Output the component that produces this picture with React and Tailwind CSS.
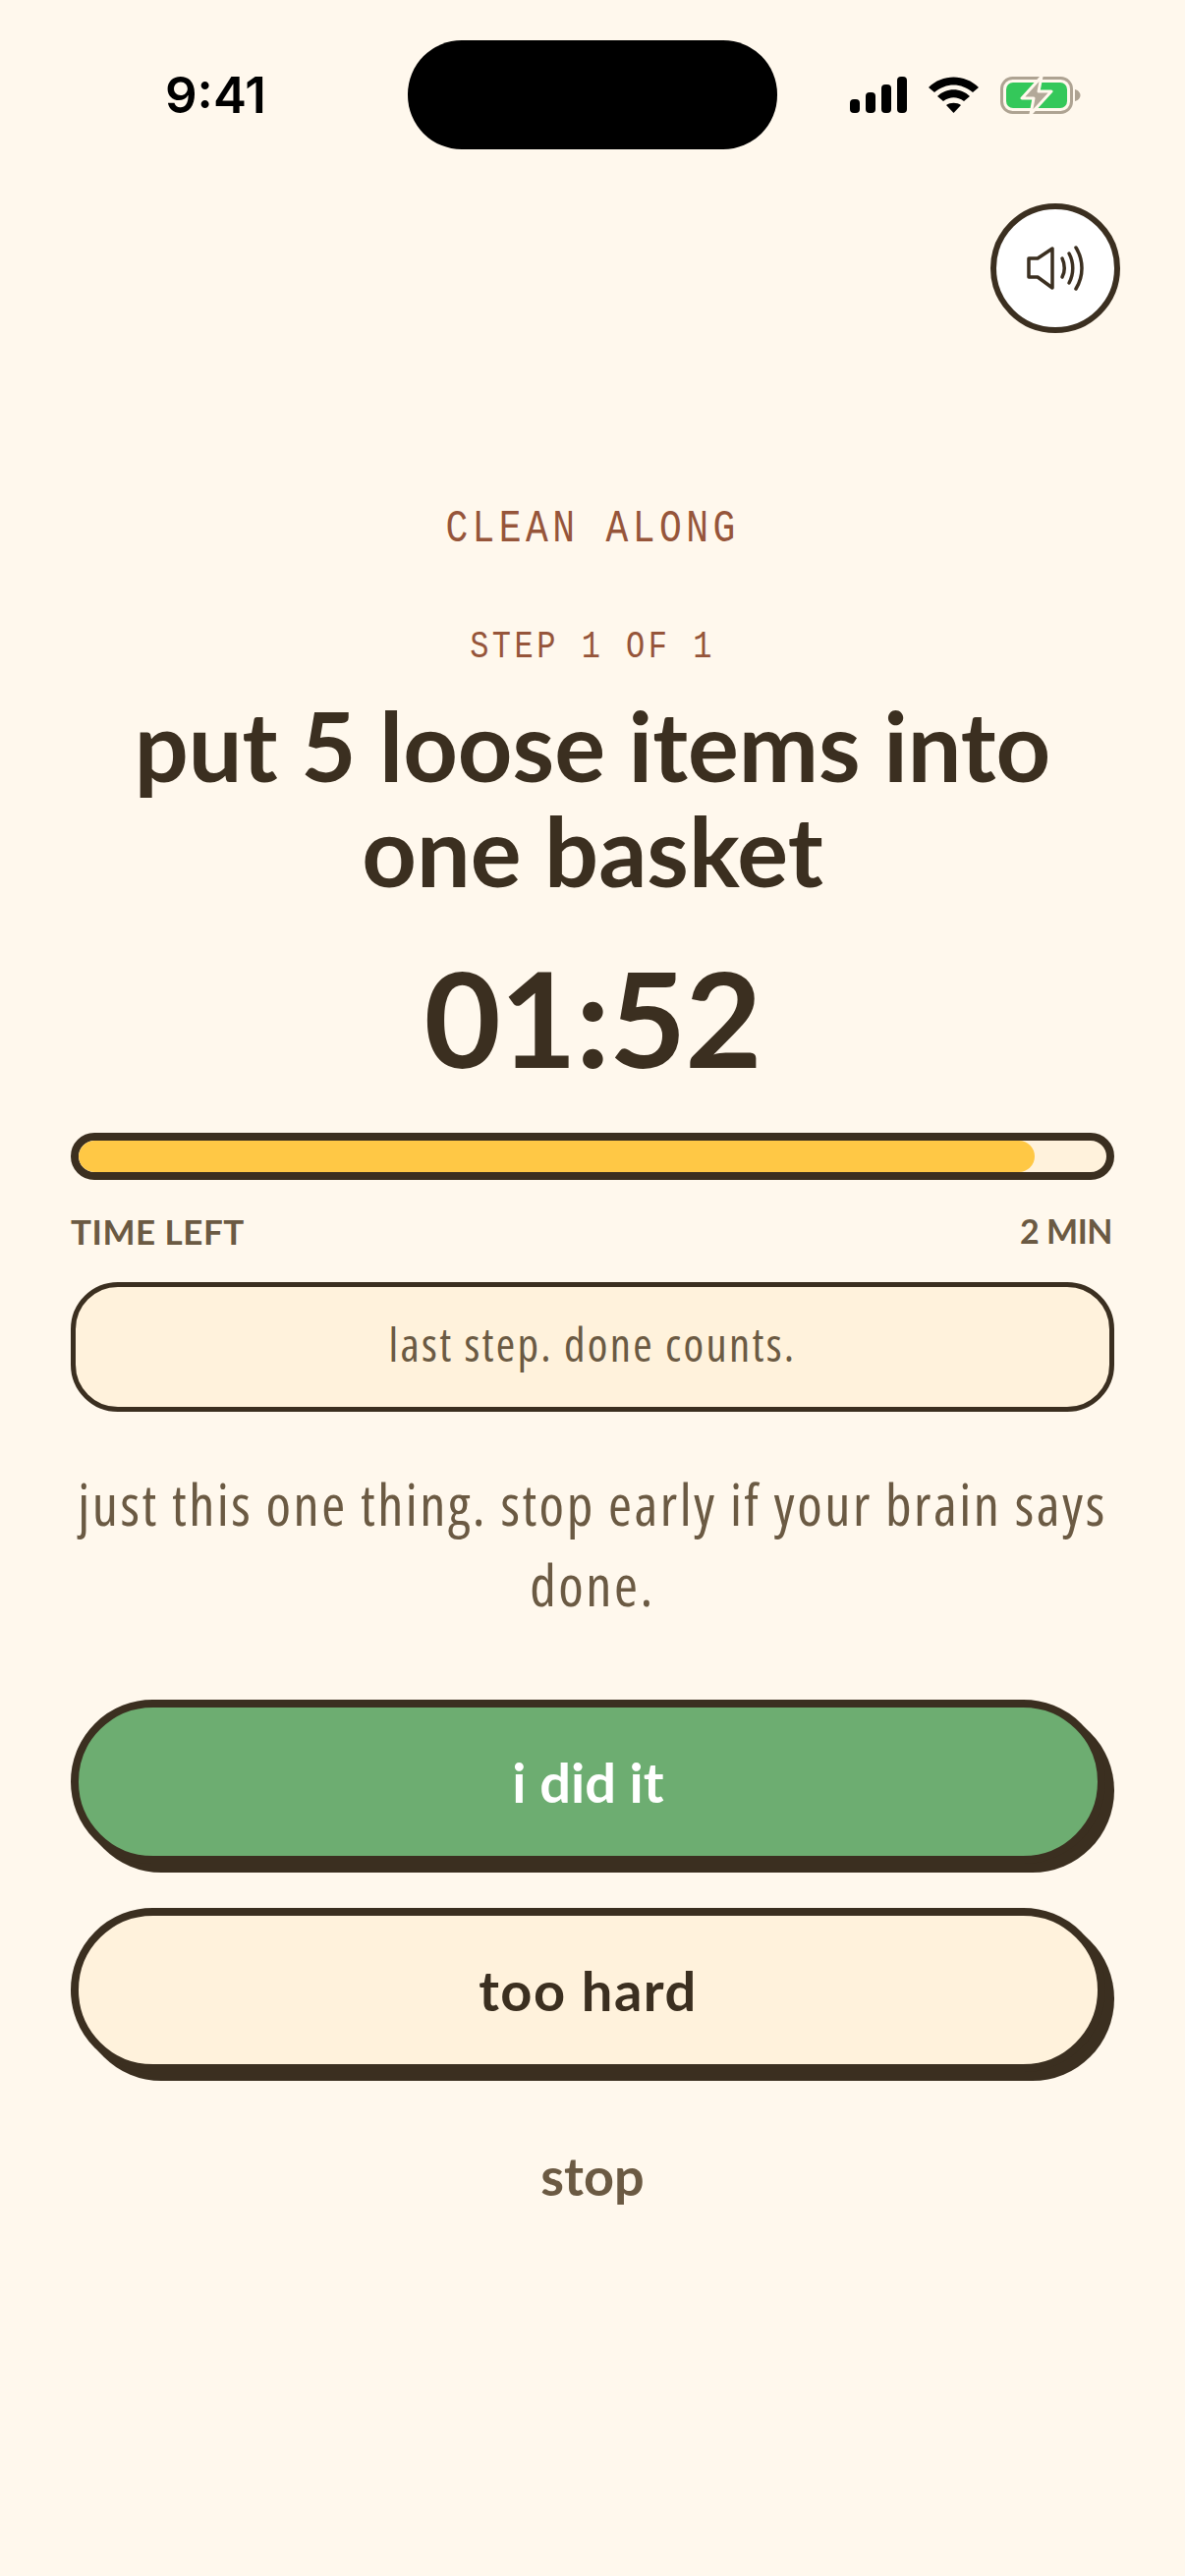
import React from 'react';

const StatusBar = () => (
    <div className="flex shrink-0 items-center pl-[168px] pt-[41px]">
        <span className="w-[102px] text-[51px] leading-none font-semibold text-black font-['Inter',sans-serif]">9:41</span>
        <div className="ml-[145px] h-[111px] w-[376px] rounded-[55px] bg-black" />
        <div className="ml-[74px] flex items-center gap-[22px]">
            <svg width="58" height="37" viewBox="0 0 58 37" fill="#000">
                <rect x="0" y="23" width="10" height="14" rx="4" />
                <rect x="16" y="16" width="10" height="21" rx="4" />
                <rect x="32" y="8" width="10" height="29" rx="4" />
                <rect x="48" y="0" width="10" height="37" rx="4" />
            </svg>
            <svg width="51" height="37" viewBox="0 0 51 37" fill="#000">
                <path d="M0 11 C14 -3 37 -3 51 11 L45 16 C33 6 18 6 6 16 Z" />
                <path d="M9 20 C18 11 33 11 42 20 L36 25 C29 20 22 20 15 25 Z" />
                <path d="M18 29 C22 26 29 26 33 29 L25.5 37 Z" />
            </svg>
            <svg width="82" height="40" viewBox="0 0 82 40">
                <rect x="1.5" y="2.5" width="71" height="35" rx="11" fill="none" stroke="#aea392" strokeWidth="3" />
                <rect x="6" y="7" width="62" height="26" rx="7" fill="#34c85a" />
                <path d="M76 14 C80 15 81.5 18 81.5 20 C81.5 22 80 25 76 26 Z" fill="#aea392" />
                <path d="M42 1 L22 23 L34 23 L31 39 L52 16 L39 16 Z" fill="#b3a999" stroke="#fff8ed" strokeWidth="3" strokeLinejoin="round" />
            </svg>
        </div>
    </div>
);

const SoundButton = () => (
    <div className="mt-[55px] flex justify-end pr-[66px]">
        <button className="flex h-[132px] w-[132px] items-center justify-center rounded-full border-[6px] border-[#3b2f20] bg-white">
            <svg width="58" height="46" viewBox="0 0 58 46" fill="none" stroke="#3b2f20" strokeWidth="3.5" strokeLinecap="round" strokeLinejoin="round">
                <path d="M2 13 H11 L26 3 V43 L11 32 H2 Z" />
                <path d="M36 13 C39 19 39 27 36 32" />
                <path d="M43 8 C48 17 48 29 43 38" />
                <path d="M50 2 C58 15 58 31 50 44" />
            </svg>
        </button>
    </div>
);

const PillButton = ({ children, className }) => (
    <button className={`flex h-[167px] w-[1053px] items-center justify-center rounded-full border-[8px] border-[#3b2f20] shadow-[9px_9px_0_#3b2f20] text-[56px] font-bold font-['Lato',sans-serif] ${className}`}>
        {children}
    </button>
);

export default function App() {
    return (
        <div className="flex min-h-[2622px] w-[1206px] flex-col bg-[#fff8ed] text-[#3b2f20]">
            <StatusBar />
            <SoundButton />
            <main className="flex flex-col items-center px-[72px]">
                <p className="mt-[175px] scale-y-[1.2] text-[38px] leading-[50px] tracking-[4.4px] text-[#96553a] font-['Liberation_Mono',monospace]">CLEAN ALONG</p>
                <p className="mt-[74px] scale-y-[1.19] text-[32px] leading-[42px] tracking-[3.5px] text-[#96553a] font-['Liberation_Mono',monospace]">STEP 1 OF 1</p>
                <h1 className="mt-[25px] w-full text-center text-[97px] leading-[107px] font-bold whitespace-nowrap font-['Lato',sans-serif]">put 5 loose items into<br />one basket</h1>
                <div className="mt-[36px] text-[135px] leading-[160px] tracking-[-1px] font-bold font-['Lato',sans-serif]">01:52</div>
                <div className="mt-[38px] h-[48px] w-full overflow-hidden rounded-full border-[8px] border-[#3b2f20] bg-[#fff2dc]">
                    <div className="h-full w-[93%] rounded-full bg-[#ffc845]" />
                </div>
                <div className="mt-[30px] flex w-full justify-between text-[35px] leading-[44px] font-bold text-[#6b5a43] font-['Lato',sans-serif]">
                    <span className="tracking-[0.5px]">TIME LEFT</span>
                    <span className="pr-[2px] text-[34px] tracking-[-0.5px]">2 MIN</span>
                </div>
                <div className="mt-[30px] flex h-[132px] w-full items-center justify-center rounded-[48px] border-[5px] border-[#3b2f20] bg-[#fff2dc] pb-[5px] text-[47px] tracking-[2.3px] text-[#6b5a43] font-['Open_Sans',sans-serif] font-stretch-condensed">last step. done counts.</div>
                <p className="mt-[53px] w-full text-center text-[58px] leading-[82px] tracking-[2.5px] text-[#6b5a43] font-['Open_Sans',sans-serif] font-stretch-condensed">just this one thing. stop early if your brain says done.</p>
                <div className="mt-[76px] flex w-full flex-col gap-[45px]">
                    <PillButton className="bg-[#6dad71] text-white">i did it</PillButton>
                    <PillButton className="bg-[#fff2dc] tracking-[1.5px] text-[#3b2f20]">too hard</PillButton>
                </div>
                <button className="mt-[73px] text-[54px] leading-[66px] font-bold text-[#6b5a43] font-['Lato',sans-serif]">stop</button>
            </main>
        </div>
    );
}
